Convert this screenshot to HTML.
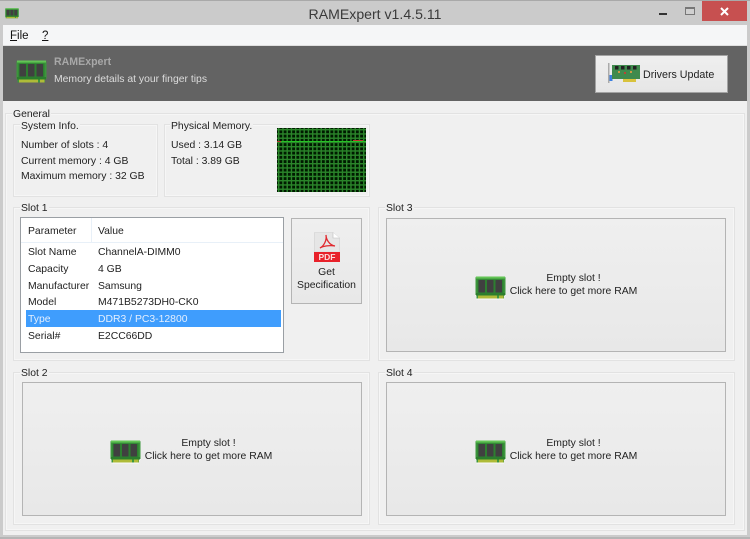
<!DOCTYPE html>
<html><head><meta charset="utf-8"><title>RAMExpert</title>
<style>
html,body{margin:0;padding:0;width:750px;height:539px;overflow:hidden;background:#cbcbcb}
*{box-sizing:border-box}
body{font-family:"Liberation Sans",sans-serif;font-size:10.4px;color:#222;position:relative}
.a{position:absolute}
.t{position:absolute;white-space:nowrap;line-height:14px;filter:blur(.25px)}
.g{position:absolute;border:1px solid #e2e2e2;box-shadow:inset 0 0 0 1px #f6f6f6}
.l{position:absolute;background:#f0f0f0;padding:0 1px;line-height:13px;white-space:nowrap;filter:blur(.25px);color:#222}
.b{position:absolute;border:1px solid #b4b4b4;background:linear-gradient(#efefef,#e8e8e8)}
.r{position:absolute;filter:blur(.3px) drop-shadow(0 1px 0 rgba(255,255,255,.8))}
</style></head><body>
<svg width="0" height="0" style="position:absolute"><defs>
<symbol id="ram" viewBox="0 0 31 24">
<path d="M2 0.500H29Q30.500 0.500 30.500 2V19H29V22.500H1.500V19H0.500V2Q0.500 0.500 2 0.500Z" fill="#3c963c"/>
<rect x="1" y="0.500" width="29" height="2" fill="#62c455"/>
<rect x="1" y="17" width="29" height="2.500" fill="#2c7d2c"/>
<rect x="2.500" y="3.500" width="26" height="14" fill="#2d7f30"/>
<rect x="3.500" y="4" width="6.500" height="12.500" rx=".5" fill="#404040"/>
<rect x="12" y="4" width="6.500" height="12.500" rx=".5" fill="#404040"/>
<rect x="20.500" y="4" width="6.500" height="12.500" rx=".5" fill="#404040"/>
<rect x="3" y="19.500" width="19" height="3" fill="#aebb38"/>
<rect x="24" y="19.500" width="4.500" height="3" fill="#aebb38"/>
</symbol>
</defs></svg>

<div class="a" style="left:0;top:0;width:750px;height:1px;background:#a9a9a9"></div>
<svg class="a" style="left:5px;top:8px;filter:blur(.25px)" width="14" height="11"><use href="#ram"/></svg>
<div class="t" style="left:0;width:750px;text-align:center;top:7px;font-size:14.1px;color:#3a3a3a">RAMExpert v1.4.5.11</div>
<div class="a" style="left:659px;top:13px;width:8px;height:2px;background:#333"></div>
<div class="a" style="left:685px;top:7px;width:10px;height:8px;border:1px solid #777;border-top-width:2px;background:#d0d0d0"></div>
<div class="a" style="left:702px;top:1px;width:45px;height:20px;background:#c75050"></div>
<svg class="a" style="left:720px;top:7px" width="9" height="9"><path d="M1 1L8 8M8 1L1 8" stroke="#fff" stroke-width="2"/></svg>

<div class="a" style="left:3px;top:25px;width:744px;height:21px;background:#f5f6f7;border-bottom:1px solid #e0e0e0"></div>
<div class="t" style="left:10px;top:29px;font-size:11.5px;color:#111"><u>F</u>ile</div>
<div class="t" style="left:42px;top:29px;font-size:11.5px;color:#111"><u>?</u></div>

<div class="a" style="left:3px;top:46px;width:744px;height:55px;background:#636363"></div>
<svg class="a" style="left:16px;top:60px;filter:blur(.3px)" width="31" height="24"><use href="#ram"/></svg>
<div class="t" style="left:54px;top:55px;font-weight:bold;font-size:10.6px;color:#a8a8a8">RAMExpert</div>
<div class="t" style="left:54px;top:73px;color:#dcdcdc">Memory details at your finger tips</div>
<div class="b" style="left:595px;top:55px;width:133px;height:38px;border:1px solid #a3a3a3;background:linear-gradient(#efefef,#e6e6e6)"></div>
<svg class="a" style="left:608px;top:63px;filter:blur(.3px)" width="32" height="21" viewBox="0 0 32 21">
<rect x="0" y="0" width="1.500" height="20" fill="#aaa"/>
<rect x="1.500" y="2" width="3" height="10" fill="#eee"/>
<rect x="1.500" y="12" width="3" height="6" fill="#3a7ee0"/>
<rect x="4" y="2" width="28" height="14" fill="#3f8a4d"/>
<rect x="7" y="3" width="3.500" height="3.500" fill="#222"/><rect x="13" y="3" width="3.500" height="3.500" fill="#222"/><rect x="19" y="3" width="3.500" height="3.500" fill="#222"/><rect x="25" y="3" width="3.500" height="3.500" fill="#222"/>
<rect x="10" y="8" width="2" height="2" fill="#c94"/><rect x="16" y="9" width="2" height="2" fill="#b43"/><rect x="22" y="8" width="2" height="2" fill="#c94"/>
<rect x="15" y="16" width="13" height="3" fill="#d8c23c"/>
</svg>
<div class="t" style="left:643px;top:68px;font-size:10.7px;color:#222">Drivers Update</div>

<div class="a" style="left:3px;top:101px;width:744px;height:434px;background:#f0f0f0"></div>

<div class="g" style="left:5px;top:113px;width:740px;height:418px"></div>
<div class="l" style="left:12px;top:108px">General</div>

<div class="g" style="left:13px;top:124px;width:145px;height:73px"></div>
<div class="l" style="left:20px;top:120px">System Info.</div>
<div class="t" style="left:21px;top:139px">Number of slots : 4</div>
<div class="t" style="left:21px;top:155px">Current memory : 4 GB</div>
<div class="t" style="left:21px;top:170px">Maximum memory : 32 GB</div>

<div class="g" style="left:164px;top:124px;width:206px;height:73px"></div>
<div class="l" style="left:170px;top:120px">Physical Memory.</div>
<div class="t" style="left:171px;top:139px">Used : 3.14 GB</div>
<div class="t" style="left:171px;top:155px">Total : 3.89 GB</div>
<div class="a" style="left:277px;top:128px;width:89px;height:64px;background-color:#001a00;background-image:linear-gradient(90deg,#2a842a 1.6px,transparent 1.6px),linear-gradient(#2a842a 1.6px,transparent 1.6px);background-size:4.25px 4.25px;background-position:1px 1px;filter:blur(.3px)"></div>
<div class="a" style="left:277px;top:141px;width:89px;height:1px;background:#25c225"></div>
<div class="a" style="left:277px;top:141px;width:4px;height:1px;background:#b33"></div>
<div class="a" style="left:353px;top:140px;width:10px;height:1px;background:#b33"></div>

<div class="g" style="left:13px;top:207px;width:357px;height:154px"></div>
<div class="l" style="left:20px;top:202px">Slot 1</div>
<div class="a" style="left:20px;top:217px;width:264px;height:136px;background:#fff;border:1px solid #9a9fa4"></div>
<div class="a" style="left:21px;top:242px;width:262px;height:1px;background:#e8f0f8"></div>
<div class="a" style="left:91px;top:218px;width:1px;height:24px;background:#e8f0f8"></div>
<div class="a" style="left:26px;top:310px;width:255px;height:17px;background:#3f9dfd"></div>
<div class="t" style="left:28px;top:225px">Parameter</div><div class="t" style="left:98px;top:225px">Value</div>
<div class="t" style="left:28px;top:246px">Slot Name</div><div class="t" style="left:98px;top:246px">ChannelA-DIMM0</div>
<div class="t" style="left:28px;top:263px">Capacity</div><div class="t" style="left:98px;top:263px">4 GB</div>
<div class="t" style="left:28px;top:280px">Manufacturer</div><div class="t" style="left:98px;top:280px">Samsung</div>
<div class="t" style="left:28px;top:296px">Model</div><div class="t" style="left:98px;top:296px">M471B5273DH0-CK0</div>
<div class="t" style="left:28px;top:313px;color:#e4efff">Type</div><div class="t" style="left:98px;top:313px;color:#e4efff">DDR3 / PC3-12800</div>
<div class="t" style="left:28px;top:330px">Serial#</div><div class="t" style="left:98px;top:330px">E2CC66DD</div>

<div class="b" style="left:291px;top:218px;width:71px;height:86px"></div>
<svg class="a" style="left:314px;top:232px;filter:blur(.25px)" width="26" height="30" viewBox="0 0 26 30">
<path d="M0.500 0.500H19L25.500 6V20H0.500Z" fill="#e6e6e6" stroke="#d0d0d0" stroke-width=".6"/>
<path d="M19 0.500V6H25.500" fill="#fff" stroke="#bbb" stroke-width=".6"/>
<path d="M6 16C10 14 13 8 12 3C12 7 15 13 21 14C16 13 9 14 6 16Z" fill="none" stroke="#e0282e" stroke-width="1.300"/>
<rect x="0" y="20" width="26" height="10" fill="#e8212a"/>
</svg>
<div class="t" style="left:314px;top:252px;width:26px;text-align:center;font-size:8.5px;line-height:10px;font-weight:bold;color:#fbdcdc">PDF</div>
<div class="t" style="left:291px;top:266px;width:71px;text-align:center">Get</div>
<div class="t" style="left:291px;top:279px;width:71px;text-align:center">Specification</div>

<div class="g" style="left:378px;top:207px;width:357px;height:154px"></div>
<div class="l" style="left:385px;top:202px">Slot 3</div>
<div class="b" style="left:386px;top:218px;width:340px;height:134px"></div>
<svg class="r" style="left:475px;top:276px" width="31" height="24"><use href="#ram"/></svg>
<div class="t" style="left:507px;top:272px;width:133px;text-align:center">Empty slot !</div>
<div class="t" style="left:507px;top:285px;width:133px;text-align:center">Click here to get more RAM</div>

<div class="g" style="left:13px;top:372px;width:357px;height:153px"></div>
<div class="l" style="left:20px;top:367px">Slot 2</div>
<div class="b" style="left:22px;top:382px;width:340px;height:134px"></div>
<svg class="r" style="left:110px;top:440px" width="31" height="24"><use href="#ram"/></svg>
<div class="t" style="left:142px;top:437px;width:133px;text-align:center">Empty slot !</div>
<div class="t" style="left:142px;top:450px;width:133px;text-align:center">Click here to get more RAM</div>

<div class="g" style="left:378px;top:372px;width:357px;height:153px"></div>
<div class="l" style="left:385px;top:367px">Slot 4</div>
<div class="b" style="left:386px;top:382px;width:340px;height:134px"></div>
<svg class="r" style="left:475px;top:440px" width="31" height="24"><use href="#ram"/></svg>
<div class="t" style="left:507px;top:437px;width:133px;text-align:center">Empty slot !</div>
<div class="t" style="left:507px;top:450px;width:133px;text-align:center">Click here to get more RAM</div>

<div class="a" style="left:0;top:537px;width:750px;height:2px;background:#b5b5b5"></div>
</body></html>
